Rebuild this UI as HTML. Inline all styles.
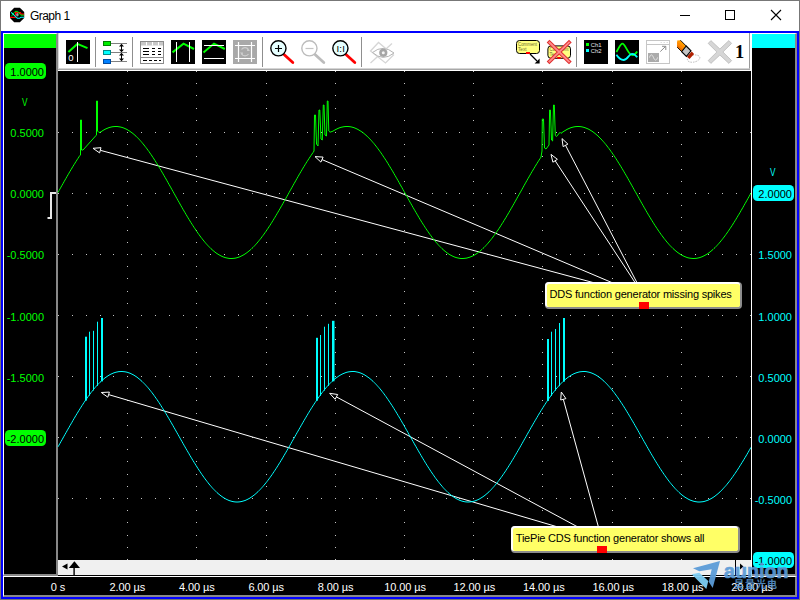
<!DOCTYPE html>
<html><head><meta charset="utf-8"><title>Graph 1</title>
<style>
html,body{margin:0;padding:0;background:#fff;}
body{width:800px;height:600px;overflow:hidden;position:relative;font-family:"Liberation Sans",sans-serif;font-size:11px;}
.a{position:absolute;}
.lbl{position:absolute;font-size:11px;line-height:12px;white-space:nowrap;}
.gl{color:#00ff00;text-align:right;left:0;width:44px;}
.cl{color:#00ffff;text-align:right;left:740px;width:52px;}
.bl{color:#fff;text-align:center;width:60px;top:581px;letter-spacing:-0.1px;}
.pill{position:absolute;height:16px;border-radius:4.5px;}
svg{position:absolute;overflow:visible;}
svg text{font-family:"Liberation Sans",sans-serif;}
</style></head><body>

<div class="a" style="left:0;top:0;width:798px;height:598px;border:1px solid #777;"></div>
<div class="a" style="left:1px;top:31px;width:794px;height:564px;border:2px solid #0000ff;background:#fff;"></div>
<svg style="left:9px;top:7px" width="16" height="16" viewBox="9 7 16 16">
<polygon points="14.2,7.8 19.9,7.8 24.2,12 24.2,18 19.9,22.3 14.2,22.3 10,18 10,12" fill="#000"/>
<polyline points="10,17.4 15.7,17.4" fill="none" stroke="#f00" stroke-width="1.2"/>
<polyline points="15.6,15.5 15.6,12.6 20.4,12.6 21.2,14.2 24.1,14.2" fill="none" stroke="#f00" stroke-width="1.3"/>
<polyline points="11.4,16.3 15.1,11.4 17.8,11.4 20.8,15.2 24.1,15.2" fill="none" stroke="#0f0" stroke-width="0.9"/>
<polyline points="11.2,12.3 17.4,18.3 19.6,18.3 20.8,17.2 24.1,17.2" fill="none" stroke="#0ff" stroke-width="1.1"/>
<ellipse cx="17.4" cy="14.8" rx="1.3" ry="1.8" fill="#999"/>
</svg>
<div class="a" style="left:30px;top:9px;font-size:12px;line-height:14px;color:#000;letter-spacing:-0.55px;">Graph 1</div>
<svg style="left:670px;top:0" width="130" height="31" viewBox="670 0 130 31">
<line x1="680" y1="15.5" x2="690" y2="15.5" stroke="#000" stroke-width="1"/>
<rect x="725.5" y="10.5" width="9" height="9" fill="none" stroke="#000" stroke-width="1"/>
<path d="M771 10L781 20M781 10L771 20" stroke="#000" stroke-width="1.1" fill="none"/>
</svg>
<div class="a" style="left:3px;top:33px;width:53px;height:541px;background:#000;border-left:1px solid #fff;border-top:1px solid #fff;border-right:2px solid #888;border-bottom:2px solid #888;box-sizing:content-box;width:52px;height:540px;"></div>
<div class="a" style="left:4px;top:34px;width:52px;height:14px;background:#00ff00;"></div>
<div class="pill" style="left:5px;top:63px;width:41px;background:#00ff00;"></div>
<div class="pill" style="left:5px;top:430px;width:41px;background:#00ff00;"></div>
<div class="lbl gl" style="top:66px;color:#000;">1.0000</div>
<div class="lbl gl" style="top:127px;">0.5000</div>
<div class="lbl gl" style="top:188px;">0.0000</div>
<div class="lbl gl" style="top:249px;">-0.5000</div>
<div class="lbl gl" style="top:311px;">-1.0000</div>
<div class="lbl gl" style="top:372px;">-1.5000</div>
<div class="lbl gl" style="top:433px;color:#000;">-2.0000</div>
<div class="lbl" style="left:20.7px;top:96px;color:#00ff00;transform:scaleX(0.75);">V</div>
<svg style="left:46px;top:190px" width="12" height="32" viewBox="46 190 12 32"><polyline points="56,193 51,193 51,218 47.5,218" fill="none" stroke="#e8e8e8" stroke-width="2"/></svg>
<div class="a" style="left:750px;top:33px;width:43px;height:540px;background:#000;border-left:2px solid #fff;border-top:1px solid #fff;border-right:2px solid #888;border-bottom:2px solid #888;"></div>
<div class="a" style="left:752px;top:34px;width:43px;height:14px;background:#00ffff;"></div>
<div class="pill" style="left:753px;top:185px;width:41px;background:#00ffff;"></div>
<div class="pill" style="left:753px;top:552px;width:41px;background:#00ffff;"></div>
<div class="lbl cl" style="top:188px;color:#000;">2.0000</div>
<div class="lbl cl" style="top:249px;">1.5000</div>
<div class="lbl cl" style="top:311px;">1.0000</div>
<div class="lbl cl" style="top:372px;">0.5000</div>
<div class="lbl cl" style="top:433px;">0.0000</div>
<div class="lbl cl" style="top:494px;">-0.5000</div>
<div class="lbl cl" style="top:555px;color:#000;">-1.0000</div>
<div class="lbl" style="left:768.7px;top:166px;color:#00ffff;transform:scaleX(0.75);">V</div>
<div class="a" style="left:3px;top:576px;width:791px;height:18px;background:#000;border-left:1px solid #fff;border-top:1px solid #fff;border-right:2px solid #888;border-bottom:2px solid #888;"></div>
<div class="lbl bl" style="left:28.0px;">0 s</div>
<div class="lbl bl" style="left:97.4px;">2.00 µs</div>
<div class="lbl bl" style="left:166.8px;">4.00 µs</div>
<div class="lbl bl" style="left:236.2px;">6.00 µs</div>
<div class="lbl bl" style="left:305.6px;">8.00 µs</div>
<div class="lbl bl" style="left:375.0px;">10.00 µs</div>
<div class="lbl bl" style="left:444.4px;">12.00 µs</div>
<div class="lbl bl" style="left:513.8px;">14.00 µs</div>
<div class="lbl bl" style="left:583.2px;">16.00 µs</div>
<div class="lbl bl" style="left:652.6px;">18.00 µs</div>
<div class="lbl bl" style="left:722.0px;">20.00 µs</div>
<div class="a" style="left:58px;top:71px;width:693px;height:505px;background:#000;"></div>
<svg style="left:0;top:0" width="800" height="600" viewBox="0 0 800 600">
<path d="M127 71h1M127 83h1M127 95h1M127 108h1M127 120h1M127 132h1M127 144h1M127 156h1M127 169h1M127 181h1M127 193h1M127 205h1M127 217h1M127 230h1M127 242h1M127 254h1M127 266h1M127 278h1M127 291h1M127 303h1M127 315h1M127 327h1M127 339h1M127 352h1M127 364h1M127 376h1M127 388h1M127 400h1M127 413h1M127 425h1M127 437h1M127 449h1M127 461h1M127 474h1M127 486h1M127 498h1M127 510h1M127 522h1M127 535h1M127 547h1M127 559h1M196 71h1M196 83h1M196 95h1M196 108h1M196 120h1M196 132h1M196 144h1M196 156h1M196 169h1M196 181h1M196 193h1M196 205h1M196 217h1M196 230h1M196 242h1M196 254h1M196 266h1M196 278h1M196 291h1M196 303h1M196 315h1M196 327h1M196 339h1M196 352h1M196 364h1M196 376h1M196 388h1M196 400h1M196 413h1M196 425h1M196 437h1M196 449h1M196 461h1M196 474h1M196 486h1M196 498h1M196 510h1M196 522h1M196 535h1M196 547h1M196 559h1M266 71h1M266 83h1M266 95h1M266 108h1M266 120h1M266 132h1M266 144h1M266 156h1M266 169h1M266 181h1M266 193h1M266 205h1M266 217h1M266 230h1M266 242h1M266 254h1M266 266h1M266 278h1M266 291h1M266 303h1M266 315h1M266 327h1M266 339h1M266 352h1M266 364h1M266 376h1M266 388h1M266 400h1M266 413h1M266 425h1M266 437h1M266 449h1M266 461h1M266 474h1M266 486h1M266 498h1M266 510h1M266 522h1M266 535h1M266 547h1M266 559h1M335 71h1M335 83h1M335 95h1M335 108h1M335 120h1M335 132h1M335 144h1M335 156h1M335 169h1M335 181h1M335 193h1M335 205h1M335 217h1M335 230h1M335 242h1M335 254h1M335 266h1M335 278h1M335 291h1M335 303h1M335 315h1M335 327h1M335 339h1M335 352h1M335 364h1M335 376h1M335 388h1M335 400h1M335 413h1M335 425h1M335 437h1M335 449h1M335 461h1M335 474h1M335 486h1M335 498h1M335 510h1M335 522h1M335 535h1M335 547h1M335 559h1M404 71h1M404 83h1M404 95h1M404 108h1M404 120h1M404 132h1M404 144h1M404 156h1M404 169h1M404 181h1M404 193h1M404 205h1M404 217h1M404 230h1M404 242h1M404 254h1M404 266h1M404 278h1M404 291h1M404 303h1M404 315h1M404 327h1M404 339h1M404 352h1M404 364h1M404 376h1M404 388h1M404 400h1M404 413h1M404 425h1M404 437h1M404 449h1M404 461h1M404 474h1M404 486h1M404 498h1M404 510h1M404 522h1M404 535h1M404 547h1M404 559h1M473 71h1M473 83h1M473 95h1M473 108h1M473 120h1M473 132h1M473 144h1M473 156h1M473 169h1M473 181h1M473 193h1M473 205h1M473 217h1M473 230h1M473 242h1M473 254h1M473 266h1M473 278h1M473 291h1M473 303h1M473 315h1M473 327h1M473 339h1M473 352h1M473 364h1M473 376h1M473 388h1M473 400h1M473 413h1M473 425h1M473 437h1M473 449h1M473 461h1M473 474h1M473 486h1M473 498h1M473 510h1M473 522h1M473 535h1M473 547h1M473 559h1M542 71h1M542 83h1M542 95h1M542 108h1M542 120h1M542 132h1M542 144h1M542 156h1M542 169h1M542 181h1M542 193h1M542 205h1M542 217h1M542 230h1M542 242h1M542 254h1M542 266h1M542 278h1M542 291h1M542 303h1M542 315h1M542 327h1M542 339h1M542 352h1M542 364h1M542 376h1M542 388h1M542 400h1M542 413h1M542 425h1M542 437h1M542 449h1M542 461h1M542 474h1M542 486h1M542 498h1M542 510h1M542 522h1M542 535h1M542 547h1M542 559h1M612 71h1M612 83h1M612 95h1M612 108h1M612 120h1M612 132h1M612 144h1M612 156h1M612 169h1M612 181h1M612 193h1M612 205h1M612 217h1M612 230h1M612 242h1M612 254h1M612 266h1M612 278h1M612 291h1M612 303h1M612 315h1M612 327h1M612 339h1M612 352h1M612 364h1M612 376h1M612 388h1M612 400h1M612 413h1M612 425h1M612 437h1M612 449h1M612 461h1M612 474h1M612 486h1M612 498h1M612 510h1M612 522h1M612 535h1M612 547h1M612 559h1M681 71h1M681 83h1M681 95h1M681 108h1M681 120h1M681 132h1M681 144h1M681 156h1M681 169h1M681 181h1M681 193h1M681 205h1M681 217h1M681 230h1M681 242h1M681 254h1M681 266h1M681 278h1M681 291h1M681 303h1M681 315h1M681 327h1M681 339h1M681 352h1M681 364h1M681 376h1M681 388h1M681 400h1M681 413h1M681 425h1M681 437h1M681 449h1M681 461h1M681 474h1M681 486h1M681 498h1M681 510h1M681 522h1M681 535h1M681 547h1M681 559h1M58 132h1M72 132h1M86 132h1M100 132h1M113 132h1M141 132h1M155 132h1M169 132h1M183 132h1M210 132h1M224 132h1M238 132h1M252 132h1M279 132h1M293 132h1M307 132h1M321 132h1M349 132h1M362 132h1M376 132h1M390 132h1M418 132h1M432 132h1M446 132h1M459 132h1M487 132h1M501 132h1M515 132h1M529 132h1M556 132h1M570 132h1M584 132h1M598 132h1M625 132h1M639 132h1M653 132h1M667 132h1M695 132h1M708 132h1M722 132h1M736 132h1M750 132h1M58 193h1M72 193h1M86 193h1M100 193h1M113 193h1M141 193h1M155 193h1M169 193h1M183 193h1M210 193h1M224 193h1M238 193h1M252 193h1M279 193h1M293 193h1M307 193h1M321 193h1M349 193h1M362 193h1M376 193h1M390 193h1M418 193h1M432 193h1M446 193h1M459 193h1M487 193h1M501 193h1M515 193h1M529 193h1M556 193h1M570 193h1M584 193h1M598 193h1M625 193h1M639 193h1M653 193h1M667 193h1M695 193h1M708 193h1M722 193h1M736 193h1M750 193h1M58 254h1M72 254h1M86 254h1M100 254h1M113 254h1M141 254h1M155 254h1M169 254h1M183 254h1M210 254h1M224 254h1M238 254h1M252 254h1M279 254h1M293 254h1M307 254h1M321 254h1M349 254h1M362 254h1M376 254h1M390 254h1M418 254h1M432 254h1M446 254h1M459 254h1M487 254h1M501 254h1M515 254h1M529 254h1M556 254h1M570 254h1M584 254h1M598 254h1M625 254h1M639 254h1M653 254h1M667 254h1M695 254h1M708 254h1M722 254h1M736 254h1M750 254h1M58 315h1M72 315h1M86 315h1M100 315h1M113 315h1M141 315h1M155 315h1M169 315h1M183 315h1M210 315h1M224 315h1M238 315h1M252 315h1M279 315h1M293 315h1M307 315h1M321 315h1M349 315h1M362 315h1M376 315h1M390 315h1M418 315h1M432 315h1M446 315h1M459 315h1M487 315h1M501 315h1M515 315h1M529 315h1M556 315h1M570 315h1M584 315h1M598 315h1M625 315h1M639 315h1M653 315h1M667 315h1M695 315h1M708 315h1M722 315h1M736 315h1M750 315h1M58 376h1M72 376h1M86 376h1M100 376h1M113 376h1M141 376h1M155 376h1M169 376h1M183 376h1M210 376h1M224 376h1M238 376h1M252 376h1M279 376h1M293 376h1M307 376h1M321 376h1M349 376h1M362 376h1M376 376h1M390 376h1M418 376h1M432 376h1M446 376h1M459 376h1M487 376h1M501 376h1M515 376h1M529 376h1M556 376h1M570 376h1M584 376h1M598 376h1M625 376h1M639 376h1M653 376h1M667 376h1M695 376h1M708 376h1M722 376h1M736 376h1M750 376h1M58 437h1M72 437h1M86 437h1M100 437h1M113 437h1M141 437h1M155 437h1M169 437h1M183 437h1M210 437h1M224 437h1M238 437h1M252 437h1M279 437h1M293 437h1M307 437h1M321 437h1M349 437h1M362 437h1M376 437h1M390 437h1M418 437h1M432 437h1M446 437h1M459 437h1M487 437h1M501 437h1M515 437h1M529 437h1M556 437h1M570 437h1M584 437h1M598 437h1M625 437h1M639 437h1M653 437h1M667 437h1M695 437h1M708 437h1M722 437h1M736 437h1M750 437h1M58 498h1M72 498h1M86 498h1M100 498h1M113 498h1M141 498h1M155 498h1M169 498h1M183 498h1M210 498h1M224 498h1M238 498h1M252 498h1M279 498h1M293 498h1M307 498h1M321 498h1M349 498h1M362 498h1M376 498h1M390 498h1M418 498h1M432 498h1M446 498h1M459 498h1M487 498h1M501 498h1M515 498h1M529 498h1M556 498h1M570 498h1M584 498h1M598 498h1M625 498h1M639 498h1M653 498h1M667 498h1M695 498h1M708 498h1M722 498h1M736 498h1M750 498h1" stroke="#c4c4c4" stroke-width="1" fill="none" transform="translate(0,0.5)" shape-rendering="crispEdges"/>
<line x1="100.3" y1="150.3" x2="644.0" y2="296.2" stroke="#fff" stroke-width="1"/><polygon points="93.0,148.3 99.6,152.9 101.0,147.7" fill="#000" stroke="#fff" stroke-width="1"/><line x1="322.0" y1="159.6" x2="644.0" y2="296.2" stroke="#fff" stroke-width="1"/><polygon points="315.0,156.6 320.9,162.1 323.1,157.1" fill="#000" stroke="#fff" stroke-width="1"/><line x1="555.2" y1="160.8" x2="644.0" y2="296.2" stroke="#fff" stroke-width="1"/><polygon points="551.0,154.4 552.9,162.2 557.4,159.3" fill="#000" stroke="#fff" stroke-width="1"/><line x1="565.5" y1="145.3" x2="644.0" y2="296.2" stroke="#fff" stroke-width="1"/><polygon points="562.0,138.6 563.1,146.6 567.9,144.1" fill="#000" stroke="#fff" stroke-width="1"/><line x1="108.6" y1="394.6" x2="602.0" y2="540.0" stroke="#fff" stroke-width="1"/><polygon points="101.3,392.5 107.8,397.2 109.4,392.1" fill="#000" stroke="#fff" stroke-width="1"/><line x1="336.4" y1="396.9" x2="602.0" y2="540.0" stroke="#fff" stroke-width="1"/><polygon points="329.7,393.3 335.1,399.3 337.7,394.5" fill="#000" stroke="#fff" stroke-width="1"/><line x1="563.3" y1="399.3" x2="602.0" y2="540.0" stroke="#fff" stroke-width="1"/><polygon points="561.3,392.0 560.7,400.0 565.9,398.6" fill="#000" stroke="#fff" stroke-width="1"/>
<polyline points="58.0,192.5 59.0,190.7 60.0,188.9 61.0,187.1 62.0,185.3 63.0,183.6 64.0,181.8 65.0,180.0 66.0,178.3 67.0,176.5 68.0,174.8 69.0,173.1 70.0,171.3 71.0,169.7 72.0,168.0 73.0,166.3 74.0,164.7 75.0,163.1 76.0,161.5 77.0,159.9 78.0,158.4 79.0,156.8 80.0,155.3 80.5,155.0 80.5,120.0 81.5,120.0 81.5,150.0 83.0,150.0 96.0,135.5 96.5,135.0 96.5,101.0 97.5,101.0 97.5,131.0 99.0,132.5 100.0,132.3 101.0,131.8 102.0,131.1 103.0,130.4 104.0,129.9 105.0,129.3 106.0,128.8 107.0,128.4 108.0,128.0 109.0,127.6 110.0,127.3 111.0,127.1 112.0,126.8 113.0,126.7 114.0,126.6 115.0,126.5 116.0,126.5 117.0,126.5 118.0,126.6 119.0,126.8 120.0,126.9 121.0,127.2 122.0,127.4 123.0,127.8 124.0,128.1 125.0,128.6 126.0,129.0 127.0,129.5 128.0,130.1 129.0,130.7 130.0,131.4 131.0,132.1 132.0,132.8 133.0,133.6 134.0,134.4 135.0,135.3 136.0,136.2 137.0,137.2 138.0,138.2 139.0,139.2 140.0,140.3 141.0,141.4 142.0,142.6 143.0,143.8 144.0,145.0 145.0,146.3 146.0,147.6 147.0,148.9 148.0,150.3 149.0,151.6 150.0,153.1 151.0,154.5 152.0,156.0 153.0,157.5 154.0,159.0 155.0,160.6 156.0,162.2 157.0,163.8 158.0,165.4 159.0,167.1 160.0,168.7 161.0,170.4 162.0,172.1 163.0,173.8 164.0,175.6 165.0,177.3 166.0,179.0 167.0,180.8 168.0,182.6 169.0,184.4 170.0,186.1 171.0,187.9 172.0,189.7 173.0,191.5 174.0,193.3 175.0,195.1 176.0,196.9 177.0,198.7 178.0,200.5 179.0,202.2 180.0,204.0 181.0,205.8 182.0,207.5 183.0,209.3 184.0,211.0 185.0,212.7 186.0,214.4 187.0,216.1 188.0,217.8 189.0,219.4 190.0,221.0 191.0,222.7 192.0,224.2 193.0,225.8 194.0,227.3 195.0,228.8 196.0,230.3 197.0,231.8 198.0,233.2 199.0,234.6 200.0,236.0 201.0,237.3 202.0,238.6 203.0,239.9 204.0,241.1 205.0,242.3 206.0,243.5 207.0,244.6 208.0,245.7 209.0,246.7 210.0,247.7 211.0,248.7 212.0,249.6 213.0,250.5 214.0,251.3 215.0,252.1 216.0,252.9 217.0,253.6 218.0,254.2 219.0,254.8 220.0,255.4 221.0,255.9 222.0,256.4 223.0,256.8 224.0,257.2 225.0,257.5 226.0,257.8 227.0,258.0 228.0,258.2 229.0,258.4 230.0,258.5 231.0,258.5 232.0,258.5 233.0,258.4 234.0,258.3 235.0,258.2 236.0,258.0 237.0,257.7 238.0,257.4 239.0,257.1 240.0,256.7 241.0,256.2 242.0,255.7 243.0,255.2 244.0,254.6 245.0,254.0 246.0,253.3 247.0,252.6 248.0,251.8 249.0,251.0 250.0,250.2 251.0,249.3 252.0,248.3 253.0,247.4 254.0,246.4 255.0,245.3 256.0,244.2 257.0,243.1 258.0,241.9 259.0,240.7 260.0,239.4 261.0,238.2 262.0,236.8 263.0,235.5 264.0,234.1 265.0,232.7 266.0,231.3 267.0,229.8 268.0,228.3 269.0,226.8 270.0,225.3 271.0,223.7 272.0,222.1 273.0,220.5 274.0,218.8 275.0,217.2 276.0,215.5 277.0,213.8 278.0,212.1 279.0,210.4 280.0,208.7 281.0,206.9 282.0,205.2 283.0,203.4 284.0,201.6 285.0,199.8 286.0,198.1 287.0,196.3 288.0,194.5 289.0,192.7 290.0,190.9 291.0,189.1 292.0,187.3 293.0,185.5 294.0,183.7 295.0,182.0 296.0,180.2 297.0,178.4 298.0,176.7 299.0,174.9 300.0,173.2 301.0,171.5 302.0,169.8 303.0,168.1 304.0,166.5 305.0,164.8 306.0,163.2 307.0,161.6 308.0,160.1 309.0,158.5 310.0,157.0 311.0,155.5 312.0,154.0 313.0,152.6 314.0,151.0 314.5,115.0 315.5,115.0 316.5,144.0 318.0,146.0 319.0,110.0 319.8,110.0 321.0,139.0 322.3,140.0 323.3,105.0 324.0,105.0 325.0,135.0 326.5,136.0 327.3,101.0 328.0,101.0 328.8,131.0 330.0,132.2 332.0,131.5 333.0,131.1 334.0,130.5 335.0,129.9 336.0,129.4 337.0,128.9 338.0,128.4 339.0,128.0 340.0,127.6 341.0,127.3 342.0,127.1 343.0,126.9 344.0,126.7 345.0,126.6 346.0,126.5 347.0,126.5 348.0,126.5 349.0,126.6 350.0,126.7 351.0,126.9 352.0,127.1 353.0,127.4 354.0,127.7 355.0,128.1 356.0,128.5 357.0,129.0 358.0,129.5 359.0,130.1 360.0,130.7 361.0,131.3 362.0,132.0 363.0,132.7 364.0,133.5 365.0,134.4 366.0,135.2 367.0,136.1 368.0,137.1 369.0,138.1 370.0,139.1 371.0,140.2 372.0,141.3 373.0,142.5 374.0,143.6 375.0,144.9 376.0,146.1 377.0,147.4 378.0,148.8 379.0,150.1 380.0,151.5 381.0,152.9 382.0,154.4 383.0,155.9 384.0,157.4 385.0,158.9 386.0,160.4 387.0,162.0 388.0,163.6 389.0,165.3 390.0,166.9 391.0,168.6 392.0,170.2 393.0,171.9 394.0,173.7 395.0,175.4 396.0,177.1 397.0,178.9 398.0,180.6 399.0,182.4 400.0,184.2 401.0,186.0 402.0,187.7 403.0,189.5 404.0,191.3 405.0,193.1 406.0,194.9 407.0,196.7 408.0,198.5 409.0,200.3 410.0,202.1 411.0,203.8 412.0,205.6 413.0,207.4 414.0,209.1 415.0,210.8 416.0,212.5 417.0,214.2 418.0,215.9 419.0,217.6 420.0,219.3 421.0,220.9 422.0,222.5 423.0,224.1 424.0,225.6 425.0,227.2 426.0,228.7 427.0,230.2 428.0,231.6 429.0,233.1 430.0,234.5 431.0,235.8 432.0,237.2 433.0,238.5 434.0,239.8 435.0,241.0 436.0,242.2 437.0,243.3 438.0,244.5 439.0,245.6 440.0,246.6 441.0,247.6 442.0,248.6 443.0,249.5 444.0,250.4 445.0,251.2 446.0,252.0 447.0,252.8 448.0,253.5 449.0,254.2 450.0,254.8 451.0,255.3 452.0,255.9 453.0,256.3 454.0,256.8 455.0,257.2 456.0,257.5 457.0,257.8 458.0,258.0 459.0,258.2 460.0,258.4 461.0,258.5 462.0,258.5 463.0,258.5 464.0,258.4 465.0,258.3 466.0,258.2 467.0,258.0 468.0,257.7 469.0,257.4 470.0,257.1 471.0,256.7 472.0,256.3 473.0,255.8 474.0,255.3 475.0,254.7 476.0,254.1 477.0,253.4 478.0,252.7 479.0,251.9 480.0,251.1 481.0,250.3 482.0,249.4 483.0,248.4 484.0,247.5 485.0,246.5 486.0,245.4 487.0,244.3 488.0,243.2 489.0,242.0 490.0,240.8 491.0,239.6 492.0,238.3 493.0,237.0 494.0,235.6 495.0,234.3 496.0,232.9 497.0,231.4 498.0,230.0 499.0,228.5 500.0,227.0 501.0,225.4 502.0,223.8 503.0,222.3 504.0,220.6 505.0,219.0 506.0,217.4 507.0,215.7 508.0,214.0 509.0,212.3 510.0,210.6 511.0,208.8 512.0,207.1 513.0,205.3 514.0,203.6 515.0,201.8 516.0,200.0 517.0,198.2 518.0,196.4 519.0,194.7 520.0,192.9 521.0,191.1 522.0,189.3 523.0,187.5 524.0,185.7 525.0,183.9 526.0,182.1 527.0,180.4 528.0,178.6 529.0,176.9 530.0,175.1 531.0,173.4 532.0,171.7 533.0,170.0 534.0,168.3 535.0,166.7 536.0,165.0 537.0,163.4 538.0,161.8 539.0,160.2 540.0,158.7 541.0,157.1 542.0,151.0 542.3,119.0 543.5,119.0 544.5,148.0 546.0,149.0 549.0,145.0 549.6,110.0 550.4,110.0 551.5,140.0 552.6,141.0 553.5,105.0 554.3,105.0 555.3,135.5 556.5,136.5 560.0,132.3 561.0,133.4 562.0,132.6 563.0,131.9 564.0,131.2 565.0,130.6 566.0,130.0 567.0,129.4 568.0,128.9 569.0,128.5 570.0,128.0 571.0,127.7 572.0,127.4 573.0,127.1 574.0,126.9 575.0,126.7 576.0,126.6 577.0,126.5 578.0,126.5 579.0,126.5 580.0,126.6 581.0,126.7 582.0,126.9 583.0,127.1 584.0,127.4 585.0,127.7 586.0,128.1 587.0,128.5 588.0,128.9 589.0,129.4 590.0,130.0 591.0,130.6 592.0,131.2 593.0,131.9 594.0,132.7 595.0,133.4 596.0,134.3 597.0,135.1 598.0,136.0 599.0,137.0 600.0,138.0 601.0,139.0 602.0,140.1 603.0,141.2 604.0,142.3 605.0,143.5 606.0,144.7 607.0,146.0 608.0,147.3 609.0,148.6 610.0,150.0 611.0,151.4 612.0,152.8 613.0,154.2 614.0,155.7 615.0,157.2 616.0,158.7 617.0,160.3 618.0,161.9 619.0,163.5 620.0,165.1 621.0,166.7 622.0,168.4 623.0,170.1 624.0,171.8 625.0,173.5 626.0,175.2 627.0,176.9 628.0,178.7 629.0,180.5 630.0,182.2 631.0,184.0 632.0,185.8 633.0,187.6 634.0,189.4 635.0,191.2 636.0,192.9 637.0,194.7 638.0,196.5 639.0,198.3 640.0,200.1 641.0,201.9 642.0,203.7 643.0,205.4 644.0,207.2 645.0,208.9 646.0,210.7 647.0,212.4 648.0,214.1 649.0,215.8 650.0,217.4 651.0,219.1 652.0,220.7 653.0,222.3 654.0,223.9 655.0,225.5 656.0,227.0 657.0,228.5 658.0,230.0 659.0,231.5 660.0,232.9 661.0,234.3 662.0,235.7 663.0,237.0 664.0,238.4 665.0,239.6 666.0,240.9 667.0,242.1 668.0,243.2 669.0,244.4 670.0,245.5 671.0,246.5 672.0,247.5 673.0,248.5 674.0,249.4 675.0,250.3 676.0,251.1 677.0,252.0 678.0,252.7 679.0,253.4 680.0,254.1 681.0,254.7 682.0,255.3 683.0,255.8 684.0,256.3 685.0,256.7 686.0,257.1 687.0,257.5 688.0,257.8 689.0,258.0 690.0,258.2 691.0,258.3 692.0,258.4 693.0,258.5 694.0,258.5 695.0,258.4 696.0,258.4 697.0,258.2 698.0,258.0 699.0,257.8 700.0,257.5 701.0,257.1 702.0,256.8 703.0,256.3 704.0,255.8 705.0,255.3 706.0,254.7 707.0,254.1 708.0,253.5 709.0,252.7 710.0,252.0 711.0,251.2 712.0,250.3 713.0,249.5 714.0,248.5 715.0,247.6 716.0,246.6 717.0,245.5 718.0,244.4 719.0,243.3 720.0,242.1 721.0,240.9 722.0,239.7 723.0,238.4 724.0,237.1 725.0,235.8 726.0,234.4 727.0,233.0 728.0,231.6 729.0,230.1 730.0,228.6 731.0,227.1 732.0,225.6 733.0,224.0 734.0,222.4 735.0,220.8 736.0,219.2 737.0,217.5 738.0,215.8 739.0,214.2 740.0,212.5 741.0,210.7 742.0,209.0 743.0,207.3 744.0,205.5 745.0,203.7 746.0,202.0 747.0,200.2 748.0,198.4 749.0,196.6 750.0,194.8 751.0,193.0" fill="none" stroke="#00ff00" stroke-width="1" stroke-linejoin="round"/>
<polyline points="58.0,446.8 59.0,445.1 60.0,443.3 61.0,441.5 62.0,439.8 63.0,438.0 64.0,436.2 65.0,434.4 66.0,432.7 67.0,430.9 68.0,429.1 69.0,427.4 70.0,425.6 71.0,423.9 72.0,422.2 73.0,420.4 74.0,418.7 75.0,417.0 76.0,415.3 77.0,413.7 78.0,412.0 79.0,410.4 80.0,408.8 81.0,407.2 82.0,405.6 83.0,404.1 84.0,402.5 85.0,401.0 86.0,399.6 87.0,398.1 88.0,396.7 89.0,395.3 90.0,394.0 91.0,392.6 92.0,391.4 93.0,390.1 94.0,388.9 95.0,387.7 96.0,386.5 97.0,385.4 98.0,384.3 99.0,383.3 100.0,382.3 101.0,381.4 102.0,380.4 103.0,379.6 104.0,378.7 105.0,377.9 106.0,377.2 107.0,376.5 108.0,375.8 109.0,375.2 110.0,374.6 111.0,374.1 112.0,373.7 113.0,373.2 114.0,372.8 115.0,372.5 116.0,372.2 117.0,372.0 118.0,371.8 119.0,371.6 120.0,371.6 121.0,371.5 122.0,371.5 123.0,371.6 124.0,371.7 125.0,371.8 126.0,372.0 127.0,372.2 128.0,372.5 129.0,372.9 130.0,373.2 131.0,373.7 132.0,374.2 133.0,374.7 134.0,375.2 135.0,375.9 136.0,376.5 137.0,377.2 138.0,378.0 139.0,378.8 140.0,379.6 141.0,380.5 142.0,381.4 143.0,382.4 144.0,383.4 145.0,384.4 146.0,385.5 147.0,386.6 148.0,387.7 149.0,388.9 150.0,390.2 151.0,391.4 152.0,392.7 153.0,394.0 154.0,395.4 155.0,396.8 156.0,398.2 157.0,399.6 158.0,401.1 159.0,402.6 160.0,404.1 161.0,405.7 162.0,407.3 163.0,408.9 164.0,410.5 165.0,412.1 166.0,413.7 167.0,415.4 168.0,417.1 169.0,418.8 170.0,420.5 171.0,422.2 172.0,424.0 173.0,425.7 174.0,427.5 175.0,429.2 176.0,431.0 177.0,432.8 178.0,434.5 179.0,436.3 180.0,438.1 181.0,439.9 182.0,441.6 183.0,443.4 184.0,445.2 185.0,446.9 186.0,448.7 187.0,450.4 188.0,452.1 189.0,453.8 190.0,455.6 191.0,457.2 192.0,458.9 193.0,460.6 194.0,462.2 195.0,463.8 196.0,465.4 197.0,467.0 198.0,468.6 199.0,470.1 200.0,471.6 201.0,473.1 202.0,474.6 203.0,476.0 204.0,477.4 205.0,478.8 206.0,480.1 207.0,481.4 208.0,482.7 209.0,484.0 210.0,485.2 211.0,486.3 212.0,487.5 213.0,488.6 214.0,489.6 215.0,490.6 216.0,491.6 217.0,492.6 218.0,493.5 219.0,494.3 220.0,495.1 221.0,495.9 222.0,496.6 223.0,497.3 224.0,498.0 225.0,498.5 226.0,499.1 227.0,499.6 228.0,500.0 229.0,500.5 230.0,500.8 231.0,501.1 232.0,501.4 233.0,501.6 234.0,501.8 235.0,501.9 236.0,502.0 237.0,502.0 238.0,502.0 239.0,501.9 240.0,501.8 241.0,501.6 242.0,501.4 243.0,501.1 244.0,500.8 245.0,500.5 246.0,500.1 247.0,499.6 248.0,499.1 249.0,498.6 250.0,498.0 251.0,497.3 252.0,496.7 253.0,495.9 254.0,495.2 255.0,494.4 256.0,493.5 257.0,492.6 258.0,491.7 259.0,490.7 260.0,489.7 261.0,488.6 262.0,487.5 263.0,486.4 264.0,485.2 265.0,484.0 266.0,482.8 267.0,481.5 268.0,480.2 269.0,478.9 270.0,477.5 271.0,476.1 272.0,474.7 273.0,473.2 274.0,471.7 275.0,470.2 276.0,468.7 277.0,467.1 278.0,465.5 279.0,463.9 280.0,462.3 281.0,460.7 282.0,459.0 283.0,457.3 284.0,455.6 285.0,453.9 286.0,452.2 287.0,450.5 288.0,448.7 289.0,447.0 290.0,445.2 291.0,443.5 292.0,441.7 293.0,439.9 294.0,438.2 295.0,436.4 296.0,434.6 297.0,432.8 298.0,431.1 299.0,429.3 300.0,427.6 301.0,425.8 302.0,424.1 303.0,422.3 304.0,420.6 305.0,418.9 306.0,417.2 307.0,415.5 308.0,413.8 309.0,412.2 310.0,410.5 311.0,408.9 312.0,407.3 313.0,405.8 314.0,404.2 315.0,402.7 316.0,401.2 317.0,399.7 318.0,398.3 319.0,396.8 320.0,395.5 321.0,394.1 322.0,392.8 323.0,391.5 324.0,390.2 325.0,389.0 326.0,387.8 327.0,386.6 328.0,385.5 329.0,384.5 330.0,383.4 331.0,382.4 332.0,381.4 333.0,380.5 334.0,379.6 335.0,378.8 336.0,378.0 337.0,377.3 338.0,376.6 339.0,375.9 340.0,375.3 341.0,374.7 342.0,374.2 343.0,373.7 344.0,373.3 345.0,372.9 346.0,372.5 347.0,372.2 348.0,372.0 349.0,371.8 350.0,371.7 351.0,371.6 352.0,371.5 353.0,371.5 354.0,371.5 355.0,371.6 356.0,371.8 357.0,372.0 358.0,372.2 359.0,372.5 360.0,372.8 361.0,373.2 362.0,373.6 363.0,374.1 364.0,374.6 365.0,375.2 366.0,375.8 367.0,376.5 368.0,377.2 369.0,377.9 370.0,378.7 371.0,379.5 372.0,380.4 373.0,381.3 374.0,382.3 375.0,383.3 376.0,384.3 377.0,385.4 378.0,386.5 379.0,387.6 380.0,388.8 381.0,390.0 382.0,391.3 383.0,392.6 384.0,393.9 385.0,395.3 386.0,396.6 387.0,398.1 388.0,399.5 389.0,401.0 390.0,402.5 391.0,404.0 392.0,405.5 393.0,407.1 394.0,408.7 395.0,410.3 396.0,411.9 397.0,413.6 398.0,415.3 399.0,416.9 400.0,418.6 401.0,420.3 402.0,422.1 403.0,423.8 404.0,425.5 405.0,427.3 406.0,429.1 407.0,430.8 408.0,432.6 409.0,434.4 410.0,436.1 411.0,437.9 412.0,439.7 413.0,441.4 414.0,443.2 415.0,445.0 416.0,446.7 417.0,448.5 418.0,450.2 419.0,452.0 420.0,453.7 421.0,455.4 422.0,457.1 423.0,458.8 424.0,460.4 425.0,462.1 426.0,463.7 427.0,465.3 428.0,466.9 429.0,468.4 430.0,470.0 431.0,471.5 432.0,473.0 433.0,474.4 434.0,475.9 435.0,477.3 436.0,478.7 437.0,480.0 438.0,481.3 439.0,482.6 440.0,483.8 441.0,485.0 442.0,486.2 443.0,487.4 444.0,488.5 445.0,489.5 446.0,490.5 447.0,491.5 448.0,492.5 449.0,493.4 450.0,494.2 451.0,495.1 452.0,495.8 453.0,496.6 454.0,497.2 455.0,497.9 456.0,498.5 457.0,499.0 458.0,499.5 459.0,500.0 460.0,500.4 461.0,500.8 462.0,501.1 463.0,501.4 464.0,501.6 465.0,501.8 466.0,501.9 467.0,502.0 468.0,502.0 469.0,502.0 470.0,501.9 471.0,501.8 472.0,501.6 473.0,501.4 474.0,501.2 475.0,500.9 476.0,500.5 477.0,500.1 478.0,499.7 479.0,499.2 480.0,498.6 481.0,498.0 482.0,497.4 483.0,496.7 484.0,496.0 485.0,495.3 486.0,494.4 487.0,493.6 488.0,492.7 489.0,491.8 490.0,490.8 491.0,489.8 492.0,488.7 493.0,487.6 494.0,486.5 495.0,485.3 496.0,484.1 497.0,482.9 498.0,481.6 499.0,480.3 500.0,479.0 501.0,477.6 502.0,476.2 503.0,474.8 504.0,473.3 505.0,471.9 506.0,470.4 507.0,468.8 508.0,467.3 509.0,465.7 510.0,464.1 511.0,462.5 512.0,460.8 513.0,459.2 514.0,457.5 515.0,455.8 516.0,454.1 517.0,452.4 518.0,450.7 519.0,448.9 520.0,447.2 521.0,445.4 522.0,443.7 523.0,441.9 524.0,440.1 525.0,438.3 526.0,436.6 527.0,434.8 528.0,433.0 529.0,431.3 530.0,429.5 531.0,427.7 532.0,426.0 533.0,424.2 534.0,422.5 535.0,420.8 536.0,419.1 537.0,417.4 538.0,415.7 539.0,414.0 540.0,412.3 541.0,410.7 542.0,409.1 543.0,407.5 544.0,405.9 545.0,404.4 546.0,402.8 547.0,401.3 548.0,399.9 549.0,398.4 550.0,397.0 551.0,395.6 552.0,394.2 553.0,392.9 554.0,391.6 555.0,390.3 556.0,389.1 557.0,387.9 558.0,386.8 559.0,385.6 560.0,384.6 561.0,383.5 562.0,382.5 563.0,381.5 564.0,380.6 565.0,379.7 566.0,378.9 567.0,378.1 568.0,377.3 569.0,376.6 570.0,376.0 571.0,375.3 572.0,374.8 573.0,374.2 574.0,373.7 575.0,373.3 576.0,372.9 577.0,372.6 578.0,372.3 579.0,372.0 580.0,371.8 581.0,371.7 582.0,371.6 583.0,371.5 584.0,371.5 585.0,371.5 586.0,371.6 587.0,371.8 588.0,372.0 589.0,372.2 590.0,372.5 591.0,372.8 592.0,373.2 593.0,373.6 594.0,374.1 595.0,374.6 596.0,375.1 597.0,375.7 598.0,376.4 599.0,377.1 600.0,377.8 601.0,378.6 602.0,379.4 603.0,380.3 604.0,381.2 605.0,382.2 606.0,383.2 607.0,384.2 608.0,385.3 609.0,386.4 610.0,387.5 611.0,388.7 612.0,389.9 613.0,391.2 614.0,392.4 615.0,393.8 616.0,395.1 617.0,396.5 618.0,397.9 619.0,399.4 620.0,400.8 621.0,402.3 622.0,403.8 623.0,405.4 624.0,406.9 625.0,408.5 626.0,410.1 627.0,411.8 628.0,413.4 629.0,415.1 630.0,416.8 631.0,418.5 632.0,420.2 633.0,421.9 634.0,423.6 635.0,425.4 636.0,427.1 637.0,428.9 638.0,430.6 639.0,432.4 640.0,434.2 641.0,436.0 642.0,437.7 643.0,439.5 644.0,441.3 645.0,443.0 646.0,444.8 647.0,446.6 648.0,448.3 649.0,450.1 650.0,451.8 651.0,453.5 652.0,455.2 653.0,456.9 654.0,458.6 655.0,460.2 656.0,461.9 657.0,463.5 658.0,465.1 659.0,466.7 660.0,468.3 661.0,469.8 662.0,471.3 663.0,472.8 664.0,474.3 665.0,475.7 666.0,477.1 667.0,478.5 668.0,479.9 669.0,481.2 670.0,482.5 671.0,483.7 672.0,484.9 673.0,486.1 674.0,487.2 675.0,488.4 676.0,489.4 677.0,490.4 678.0,491.4 679.0,492.4 680.0,493.3 681.0,494.2 682.0,495.0 683.0,495.8 684.0,496.5 685.0,497.2 686.0,497.8 687.0,498.4 688.0,499.0 689.0,499.5 690.0,500.0 691.0,500.4 692.0,500.7 693.0,501.1 694.0,501.3 695.0,501.6 696.0,501.7 697.0,501.9 698.0,502.0 699.0,502.0 700.0,502.0 701.0,501.9 702.0,501.8 703.0,501.7 704.0,501.5 705.0,501.2 706.0,500.9 707.0,500.5 708.0,500.2 709.0,499.7 710.0,499.2 711.0,498.7 712.0,498.1 713.0,497.5 714.0,496.8 715.0,496.1 716.0,495.3 717.0,494.5 718.0,493.7 719.0,492.8 720.0,491.9 721.0,490.9 722.0,489.9 723.0,488.8 724.0,487.7 725.0,486.6 726.0,485.5 727.0,484.3 728.0,483.0 729.0,481.8 730.0,480.5 731.0,479.1 732.0,477.8 733.0,476.4 734.0,474.9 735.0,473.5 736.0,472.0 737.0,470.5 738.0,469.0 739.0,467.4 740.0,465.8 741.0,464.2 742.0,462.6 743.0,461.0 744.0,459.3 745.0,457.7 746.0,456.0 747.0,454.3 748.0,452.6 749.0,450.8 750.0,449.1 751.0,447.3" fill="none" stroke="#00ffff" stroke-width="1" stroke-linejoin="round"/>
<rect x="85.0" y="336.7" width="2.0" height="63.9" fill="#00ffff"/>
<rect x="89.0" y="331.7" width="1.0" height="63.9" fill="#00ffff"/>
<rect x="93.0" y="330.8" width="1.0" height="59.7" fill="#00ffff"/>
<rect x="97.0" y="321.7" width="1.0" height="64.2" fill="#00ffff"/>
<rect x="101.0" y="318.0" width="2.0" height="63.4" fill="#00ffff"/>
<rect x="316.0" y="337.8" width="2.0" height="62.9" fill="#00ffff"/>
<rect x="320.0" y="335.0" width="1.0" height="60.8" fill="#00ffff"/>
<rect x="324.0" y="326.7" width="1.0" height="63.9" fill="#00ffff"/>
<rect x="328.0" y="323.8" width="1.0" height="62.2" fill="#00ffff"/>
<rect x="332.0" y="320.8" width="2.5" height="60.5" fill="#00ffff"/>
<rect x="547.0" y="339.0" width="2.0" height="61.9" fill="#00ffff"/>
<rect x="551.0" y="331.7" width="1.0" height="64.2" fill="#00ffff"/>
<rect x="555.0" y="329.0" width="1.0" height="61.7" fill="#00ffff"/>
<rect x="559.0" y="323.0" width="1.0" height="63.1" fill="#00ffff"/>
<rect x="563.0" y="318.0" width="2.0" height="63.6" fill="#00ffff"/>
</svg>
<div class="a" style="left:58px;top:560px;width:677px;height:15px;background:#f0f0f0;"></div>
<div class="a" style="left:736px;top:560px;width:15px;height:15px;background:#f0f0f0;"></div>
<div class="a" style="left:751px;top:71px;width:1px;height:505px;background:#fff;"></div>
<div class="a" style="left:4px;top:576px;width:748px;height:1px;background:#fff;"></div>
<svg style="left:58px;top:560px" width="700" height="16" viewBox="58 560 700 16">
<polygon points="62,566.5 67.5,563.5 67.5,569.5" fill="#000"/>
<polygon points="68.8,568 74.4,561.3 80,568" fill="#000"/>
<rect x="73.4" y="566" width="1.4" height="9" fill="#000"/>
<polygon points="740,563.5 743.5,566.5 740,569.5" fill="#000"/>
</svg>
<div class="a" style="left:545px;top:282px;width:197px;height:27px;background:#8c8c8c;border-radius:4px;"></div><div class="a" style="left:545px;top:282px;width:195px;height:25px;background:#fff;border-radius:4px 3px 3px 3px;"></div><div class="a" style="left:547px;top:284px;width:193px;height:23px;background:#ffff66;border-radius:2px;"></div><div class="a" style="left:639px;top:302px;width:10px;height:7px;background:#ff0000;"></div><div class="lbl" style="left:549.5px;top:288px;color:#000;letter-spacing:-0.2px;">DDS function generator missing spikes</div>
<div class="a" style="left:511px;top:526px;width:229px;height:27px;background:#8c8c8c;border-radius:4px;"></div><div class="a" style="left:511px;top:526px;width:227px;height:25px;background:#fff;border-radius:4px 3px 3px 3px;"></div><div class="a" style="left:513px;top:528px;width:225px;height:23px;background:#ffff66;border-radius:2px;"></div><div class="a" style="left:597px;top:546px;width:10px;height:7px;background:#ff0000;"></div><div class="lbl" style="left:515.8px;top:532px;color:#000;letter-spacing:-0.22px;">TiePie CDS function generator shows all</div>
<div class="a" style="left:58px;top:33px;width:690px;height:35px;background:#fff;border-left:1px solid #d8d8d8;border-bottom:1px solid #d4d4d4;border-right:1px solid #999;"></div>
<div class="a" style="left:58px;top:69px;width:692px;height:1px;background:#a8a8a8;"></div>
<div class="a" style="left:58px;top:70px;width:693px;height:1px;background:#fff;"></div>
<svg style="left:58px;top:33px" width="692" height="37" viewBox="58 33 692 37">
<!-- separators -->
<path d="M95.5 37V67M132.5 37V67M262.5 37V67M361.5 37V67M576.5 37V67" stroke="#8f8f8f" stroke-width="1" fill="none"/>
<!-- icon 1 -->
<rect x="66" y="40" width="24" height="24" fill="#000"/>
<polyline points="68.4,52.1 77.4,43.9 87.5,48.2" fill="none" stroke="#00ff00" stroke-width="2"/>
<line x1="77.5" y1="42" x2="77.5" y2="62" stroke="#fff" stroke-width="1"/>
<text x="68.3" y="61" font-size="9.5" fill="#fff">0</text>
<!-- icon 2 -->
<path d="M111 43.5H127M111 52.5H127M111 61.5H127" stroke="#808080" stroke-width="1" fill="none"/>
<rect x="103.5" y="41.5" width="7" height="4" fill="#00ee00" stroke="#008000" stroke-width="1"/>
<rect x="103.5" y="50.5" width="7" height="4" fill="#00ffff" stroke="#008b8b" stroke-width="1"/>
<rect x="103.5" y="59.5" width="7" height="4" fill="#0080ff" stroke="#004a9f" stroke-width="1"/>
<path d="M121.5 45V51M121.5 54V60" stroke="#000" stroke-width="1" fill="none"/>
<path d="M121.5 43.8L119 46.6H124ZM121.5 52.2L119 49.4H124ZM121.5 52.8L119 55.6H124ZM121.5 61.2L119 58.4H124Z" fill="#000"/>
<!-- icon 3 table -->
<rect x="140.5" y="41.5" width="23" height="22" fill="#fff" stroke="#8c8c8c" stroke-width="1"/>
<rect x="141" y="42" width="22" height="3.5" fill="#c8c8c8"/>
<path d="M146.5 42V45.5M152.5 42V45.5M158.5 42V45.5" stroke="#fff" stroke-width="1" fill="none"/>
<path d="M141 57.5H163" stroke="#8c8c8c" stroke-width="1" fill="none"/>
<path d="M143 48.5H149M152 48.5H155M158 48.5H161M143 51.5H149M152 51.5H155M158 51.5H161M143 54.5H149M152 54.5H155M158 54.5H161M143 60.5H147M149 60.5H152M154 60.5H157M159 60.5H161" stroke="#000" stroke-width="1" fill="none"/>
<!-- icon 4 -->
<rect x="171" y="40" width="24" height="24" fill="#000"/>
<polyline points="172.5,52.4 183.5,43.6 194,49" fill="none" stroke="#00ff00" stroke-width="2"/>
<path d="M176.5 42V62M189.5 42V62" stroke="#fff" stroke-width="1" fill="none"/>
<!-- icon 5 -->
<rect x="202" y="40" width="24" height="24" fill="#000"/>
<polyline points="203.5,52.4 214,43.6 224.8,49" fill="none" stroke="#00ff00" stroke-width="2"/>
<path d="M204 45.5H224M204 58.5H224" stroke="#fff" stroke-width="1" fill="none"/>
<!-- icon 6 -->
<rect x="233" y="40" width="24" height="24" fill="#a9a9a9"/>
<path d="M238.5 42V62M251.5 42V62M235 45.5H255M235 58.5H255" stroke="#fff" stroke-width="1.2" fill="none"/>
<path d="M241.5 49.5A4.2 4.2 0 0 1 248.5 49.5M248.5 54A4.2 4.2 0 0 1 241.5 54" stroke="#cfcfcf" stroke-width="1.2" fill="none"/>
<path d="M247.5 48L250 51L247 51ZM242.5 55.5L240 52.5L243 52.5Z" fill="#cfcfcf"/>
<!-- icon 7 zoom in -->
<line x1="284" y1="54.5" x2="292.8" y2="62.5" stroke="#f00" stroke-width="2.8" stroke-linecap="round"/>
<circle cx="278.4" cy="48.3" r="7.6" fill="#e6ffff" stroke="#000" stroke-width="1.4"/>
<path d="M275 48.5H282M278.5 45V52" stroke="#000" stroke-width="1.2" fill="none"/>
<!-- icon 8 zoom out -->
<line x1="315" y1="54.5" x2="323.8" y2="62.5" stroke="#bcbcbc" stroke-width="2.8" stroke-linecap="round"/>
<circle cx="309.4" cy="48.3" r="7.6" fill="#fff" stroke="#bcbcbc" stroke-width="1.4"/>
<path d="M305.5 48.5H313.5" stroke="#c4c4c4" stroke-width="1.2" fill="none"/>
<!-- icon 9 zoom 1:1 -->
<line x1="346" y1="54.5" x2="354.8" y2="62.5" stroke="#f00" stroke-width="2.8" stroke-linecap="round"/>
<circle cx="340.4" cy="48.3" r="7.6" fill="#e6ffff" stroke="#000" stroke-width="1.4"/>
<text x="336.4" y="51.8" font-size="9.6" fill="#000" textLength="8.4" lengthAdjust="spacing">I:I</text>
<!-- icon 10 eye -->
<path d="M370.5 63L392 43.5" stroke="#d6d6d6" stroke-width="1.3" fill="none"/>
<path d="M370.5 51L378.5 42.5L393.5 55L385.5 63Z" stroke="#d6d6d6" stroke-width="1.3" fill="none"/>
<path d="M372.5 52.5Q383 44 394 53Q383 62 372.5 52.5Z" fill="#fff" stroke="#b4b4b4" stroke-width="1"/>
<circle cx="383.3" cy="52.8" r="4.1" fill="#a6a6a6"/>
<circle cx="383.3" cy="52.8" r="1.5" fill="#f4f4f4"/>
<!-- comment icon -->
<line x1="530" y1="54" x2="537" y2="61" stroke="#000" stroke-width="1.2"/>
<polygon points="539.6,58.4 539.6,63.6 534.6,63.6" fill="#000"/>
<rect x="516.5" y="40.5" width="23" height="13" rx="3" fill="#ffff80" stroke="#000" stroke-width="1"/>
<text x="518" y="45.8" font-size="4.6" fill="#6e6e30" textLength="19" lengthAdjust="spacingAndGlyphs">Comment</text>
<text x="518" y="51.2" font-size="4.6" fill="#6e6e30" textLength="8.5" lengthAdjust="spacingAndGlyphs">Text</text>
<rect x="526" y="52" width="4" height="2" fill="#f00"/>
<!-- delete comment icon -->
<rect x="547.9" y="45.9" width="22.6" height="12.4" rx="3" fill="#ffff80" stroke="#000" stroke-width="1"/>
<text x="549.5" y="51" font-size="4.6" fill="#6e6e30" textLength="19" lengthAdjust="spacingAndGlyphs">Comment</text>
<text x="549.5" y="56.2" font-size="4.6" fill="#6e6e30" textLength="8.5" lengthAdjust="spacingAndGlyphs">Text</text>
<rect x="557.2" y="57" width="3.6" height="1.8" fill="#f00"/>
<path d="M549.4 42.4L569 61.6M569 42.4L549.4 61.6" stroke="#e03030" stroke-width="3.8" fill="none" stroke-linecap="square"/>
<path d="M549.4 42.4L569 61.6M569 42.4L549.4 61.6" stroke="#ff8c8c" stroke-width="1.8" fill="none" stroke-linecap="square"/>
<!-- Ch icon -->
<rect x="584" y="40" width="24" height="24" fill="#000"/>
<rect x="586" y="43" width="3" height="3" fill="#00ff00"/>
<rect x="586" y="49" width="3" height="3" fill="#00ffff"/>
<text x="590.8" y="46.7" font-size="6" fill="#e8e8e8" textLength="10.8" lengthAdjust="spacingAndGlyphs">Ch1</text>
<text x="590.8" y="52.8" font-size="6" fill="#e8e8e8" textLength="10.8" lengthAdjust="spacingAndGlyphs">Ch2</text>
<!-- sine icon -->
<rect x="615" y="40" width="24" height="24" fill="#000"/>
<path d="M616.4 52C619 48 620.5 43.6 622.4 43.6C625 43.6 627 52 631.2 54.8C633 55.6 635 55 637.2 51.6" stroke="#00ff00" stroke-width="1.8" fill="none"/>
<path d="M616.4 54.8C618.5 58 621 60 623.6 60C627.5 60 629 53.8 632 53.8C634.5 53.8 636 55.5 637.2 57.2" stroke="#00ffff" stroke-width="1.8" fill="none"/>
<!-- window icon -->
<rect x="646.5" y="40.5" width="23" height="23" fill="#fff" stroke="#c6c6c6" stroke-width="1"/>
<path d="M647 44.5H669" stroke="#c6c6c6" stroke-width="1" fill="none"/>
<path d="M660.5 42.5H662M663.5 42.5H665M666.5 42.5H668" stroke="#e0e0e0" stroke-width="1" fill="none"/>
<rect x="648" y="53" width="11" height="9" fill="#ababab"/>
<path d="M649.5 57.5C650.5 54 652 54 653.5 57.5S656.5 61 657.5 57.5" stroke="#e8e8e8" stroke-width="1" fill="none"/>
<path d="M660.3 51.6L665.6 46.4M662 46.3H665.8V50" stroke="#8c8c8c" stroke-width="1" fill="none"/>
<!-- eraser icon -->
<ellipse cx="693.6" cy="58.6" rx="6.3" ry="3.5" transform="rotate(-12 693.6 58.6)" fill="#fff" stroke="#b0b0b0" stroke-width="0.8" stroke-dasharray="1.5 1"/>
<polygon points="677.2,40.6 680.4,40.2 686.2,46 681.6,51.6 677.2,47.2" fill="#ff9900"/>
<polygon points="677.2,44.4 677.2,47.2 681.6,51.6 683.2,49.8" fill="#e86c00"/>
<polygon points="677.2,41.8 677.2,44.4 683.2,49.8 684.6,48" fill="#ff8400"/>
<path d="M680.4 40.2L686.2 46M677.2 47.2L681.6 51.6" stroke="#000" stroke-width="0.9" fill="none"/>
<polygon points="686.2,46 691,50.8 686.4,56.4 681.6,51.6" fill="#c4c4c4" stroke="#000" stroke-width="1.1"/>
<polygon points="691.7,51.6 694.1,54 689.5,59 687,56.7" fill="#b02000"/>
<!-- gray X -->
<path d="M710.9 40.6L719.9 49L728.9 40.6L731.6 43.4L722.9 52L731.6 60.6L728.9 63.4L719.9 55L710.9 63.4L708.2 60.6L716.9 52L708.2 43.4Z" fill="#d6d6d6" stroke="#bababa" stroke-width="0.8"/>
<text x="735" y="58" font-size="18.5" font-weight="bold" fill="#000" style="font-family:'Liberation Serif',serif">1</text>
</svg>

<svg style="left:685px;top:555px" width="115" height="45" viewBox="685 555 115 45">
<polygon points="693,568.3 720,560.9 712.7,588 708.7,581.7 711.7,569.3 699.3,571.3" fill="#5b9bd7" opacity="0.95"/>
<polygon points="691.7,574.3 699.3,572.7 708.3,581 706.3,589" fill="#7dcdf3" opacity="0.95"/>
<text x="724" y="577.6" font-size="19.4" font-weight="bold" fill="#5b9bd7" stroke="#5b9bd7" stroke-width="0.7" opacity="0.92" textLength="64.5" lengthAdjust="spacingAndGlyphs">aunion</text>
<text x="734" y="588.3" font-size="10" font-weight="bold" fill="#5b9bd7" opacity="0.85" style="font-family:'Liberation Sans','Noto Sans CJK SC',sans-serif" textLength="43" lengthAdjust="spacing">昊量光电</text>
</svg>
</body></html>
